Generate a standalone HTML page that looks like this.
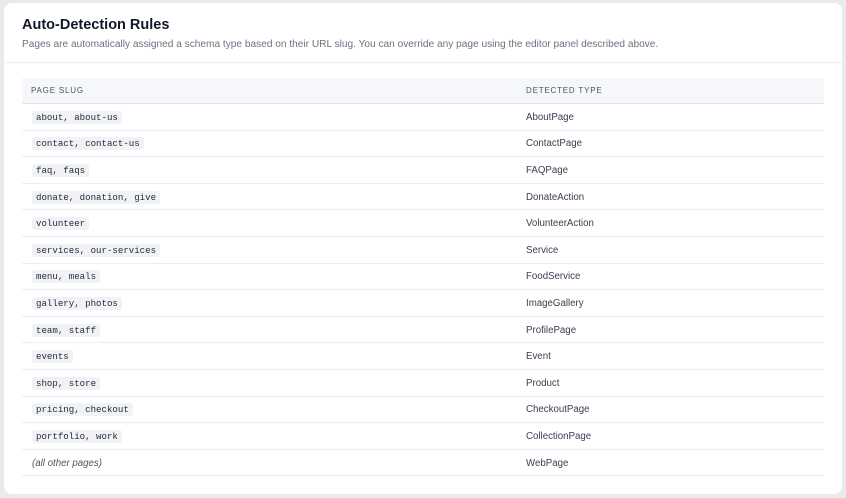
<!DOCTYPE html>
<html><head><style>
body{margin:0;width:846px;height:498px;background:#e9eaee;font-family:"Liberation Sans",sans-serif;overflow:hidden}
.card{position:absolute;left:4px;top:3px;width:838px;height:491px;background:#fff;border-radius:8px}
h1{position:absolute;left:18px;top:14px;margin:0;font-size:14.5px;font-weight:bold;color:#111827}
.sub{position:absolute;left:18px;top:36px;font-size:10.15px;color:#6b7280}
.div{position:absolute;left:0;right:0;top:59px;border-top:1px solid #eceef2}
table{position:absolute;left:18px;top:75px;width:802px;border-collapse:collapse}
th{height:25px;background:#f6f7fa;text-align:left;font-size:8px;letter-spacing:.8px;color:#4b5563;font-weight:normal;padding:0 0 0 9px;border-bottom:1px solid #e3e5ea}
td{height:23.6px;border-bottom:1px solid #eceef2;padding:2px 0 0 9px;font-size:9.7px;color:#374151;line-height:12px}
td:first-child{padding-left:10px}
th:nth-child(2),td:nth-child(2){width:298px}
code{font-family:"Liberation Mono",monospace;font-size:9.1px;background:#f1f2f5;border-radius:3px;padding:1px 4px;color:#1f2937}
i{color:#4b5563}
</style></head><body><div class="card">
<h1>Auto-Detection Rules</h1>
<div class="sub">Pages are automatically assigned a schema type based on their URL slug. You can override any page using the editor panel described above.</div>
<div class="div"></div>
<table>
<tr><th>PAGE SLUG</th><th>DETECTED TYPE</th></tr>
<tr><td><code>about, about-us</code></td><td>AboutPage</td></tr>
<tr><td><code>contact, contact-us</code></td><td>ContactPage</td></tr>
<tr><td><code>faq, faqs</code></td><td>FAQPage</td></tr>
<tr><td><code>donate, donation, give</code></td><td>DonateAction</td></tr>
<tr><td><code>volunteer</code></td><td>VolunteerAction</td></tr>
<tr><td><code>services, our-services</code></td><td>Service</td></tr>
<tr><td><code>menu, meals</code></td><td>FoodService</td></tr>
<tr><td><code>gallery, photos</code></td><td>ImageGallery</td></tr>
<tr><td><code>team, staff</code></td><td>ProfilePage</td></tr>
<tr><td><code>events</code></td><td>Event</td></tr>
<tr><td><code>shop, store</code></td><td>Product</td></tr>
<tr><td><code>pricing, checkout</code></td><td>CheckoutPage</td></tr>
<tr><td><code>portfolio, work</code></td><td>CollectionPage</td></tr>
<tr><td><i>(all other pages)</i></td><td>WebPage</td></tr>
</table>
</div></body></html>
